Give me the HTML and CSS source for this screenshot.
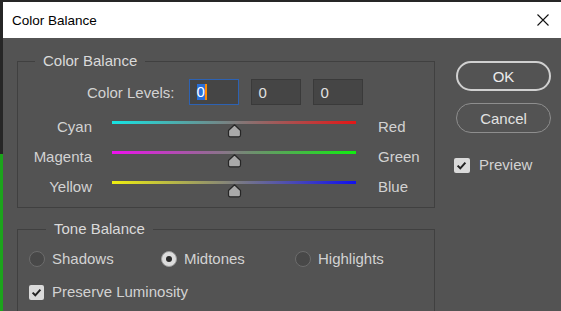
FILE: index.html
```html
<!DOCTYPE html>
<html lang="en">
<head>
    <meta charset="UTF-8">
    <meta name="viewport" content="width=device-width, initial-scale=1.0">
    <title>Color Balance</title>
    <link rel="stylesheet" href="styles.css">
</head>
<body>
    <div class="window">
        <div class="titlebar">
            <span class="title">Color Balance</span>
            <svg class="close" width="12" height="12" viewBox="0 0 12 12">
                <path d="M0.5 0.5 L11.5 11.5 M11.5 0.5 L0.5 11.5" stroke="#111" stroke-width="1.1" fill="none"/>
            </svg>
        </div>
        <div class="dialog">
            <div class="groups">
                <fieldset class="group balance">
                    <legend>Color Balance</legend>
                    <div class="levels">
                        <span class="levels-label">Color Levels:</span>
                        <div class="num focused"><span class="sel">0</span><span class="caret"></span></div>
                        <div class="num">0</div>
                        <div class="num">0</div>
                    </div>
                    <div class="slider-row">
                        <span class="from">Cyan</span>
                        <div class="track cyan-red">
                            <svg class="thumb" width="15" height="14" viewBox="0 0 15 14">
                                <path d="M7.5 0.8 L13.5 6.5 V11 Q13.5 12.8 11.7 12.8 H3.3 Q1.5 12.8 1.5 11 V6.5 Z" fill="#a9a9a9" stroke="#262626" stroke-width="1.2" stroke-linejoin="round"/>
                            </svg>
                        </div>
                        <span class="to">Red</span>
                    </div>
                    <div class="slider-row">
                        <span class="from">Magenta</span>
                        <div class="track magenta-green">
                            <svg class="thumb" width="15" height="14" viewBox="0 0 15 14">
                                <path d="M7.5 0.8 L13.5 6.5 V11 Q13.5 12.8 11.7 12.8 H3.3 Q1.5 12.8 1.5 11 V6.5 Z" fill="#a9a9a9" stroke="#262626" stroke-width="1.2" stroke-linejoin="round"/>
                            </svg>
                        </div>
                        <span class="to">Green</span>
                    </div>
                    <div class="slider-row">
                        <span class="from">Yellow</span>
                        <div class="track yellow-blue">
                            <svg class="thumb" width="15" height="14" viewBox="0 0 15 14">
                                <path d="M7.5 0.8 L13.5 6.5 V11 Q13.5 12.8 11.7 12.8 H3.3 Q1.5 12.8 1.5 11 V6.5 Z" fill="#a9a9a9" stroke="#262626" stroke-width="1.2" stroke-linejoin="round"/>
                            </svg>
                        </div>
                        <span class="to">Blue</span>
                    </div>
                </fieldset>
                <fieldset class="group tone">
                    <legend>Tone Balance</legend>
                    <div class="tones">
                        <label class="radio"><span class="dot"></span>Shadows</label>
                        <label class="radio"><span class="dot checked"></span>Midtones</label>
                        <label class="radio"><span class="dot"></span>Highlights</label>
                    </div>
                    <label class="check luminosity">
                        <span class="box"><svg width="15" height="15" viewBox="0 0 15 15"><path d="M3.6 7.6 L6.3 10.3 L11.4 4.6" stroke="#222" stroke-width="2" fill="none"/></svg></span>Preserve Luminosity
                    </label>
                </fieldset>
            </div>
            <div class="actions">
                <button class="btn default">OK</button>
                <button class="btn">Cancel</button>
                <label class="check preview">
                    <span class="box"><svg width="15" height="15" viewBox="0 0 15 15"><path d="M3.6 7.6 L6.3 10.3 L11.4 4.6" stroke="#222" stroke-width="2" fill="none"/></svg></span>Preview
                </label>
            </div>
        </div>
    </div>
</body>
</html>
```
FILE: styles.css
```css
body, html {
    margin: 0;
    padding: 0;
    width: 100%;
    height: 100%;
    overflow: hidden;
}
body {
    font-family: "Liberation Sans", Arial, sans-serif;
    font-size: 15px;
    color: #d2d2d2;
}
.window {
    height: 100%;
    box-sizing: border-box;
    padding: 2px 0 0 3px;
    display: flex;
    flex-direction: column;
    background: linear-gradient(to bottom, #262626 154px, #1ca41c 154px);
}
.titlebar {
    height: 36px;
    flex: none;
    background: #fff;
    display: flex;
    align-items: center;
    justify-content: space-between;
    padding: 0 12px 0 9px;
}
.title {
    color: #000;
    font-size: 13.5px;
}
.dialog {
    flex: 1;
    background: #535353;
    display: flex;
    align-items: flex-start;
    padding: 14px 0 0 14px;
    gap: 21px;
}
.groups {
    width: 418px;
    display: flex;
    flex-direction: column;
    gap: 12px;
}
.group {
    margin: 0;
    border: 1px solid #404040;
    min-width: 0;
}
.group legend {
    margin-left: 17px;
    padding: 0 8px;
    line-height: 18px;
    color: #dadada;
}
.balance {
    padding: 9px 0 11px 0;
}
.levels {
    display: flex;
    align-items: center;
    gap: 12px;
    margin-left: 69px;
}
.levels-label {
    margin-right: 2px;
}
.num {
    width: 50px;
    height: 26px;
    box-sizing: border-box;
    background: #454545;
    border: 1px solid #3a3a3a;
    color: #e0e0e0;
    padding-left: 7px;
    display: flex;
    align-items: center;
}
.num.focused {
    border-color: #2d62b3;
}
.sel {
    background: #2a6fd8;
    color: #fff;
    line-height: 16px;
}
.caret {
    width: 2px;
    height: 16px;
    background: #ff8a00;
}
.slider-row {
    display: grid;
    grid-template-columns: 74px 244px auto;
    column-gap: 20px;
    margin-top: 12px;
    line-height: 18px;
}
.levels + .slider-row {
    margin-top: 13px;
}
.from {
    text-align: right;
}
.to {
    margin-left: 2px;
}
.track {
    position: relative;
    height: 3px;
    margin-top: 3px;
}
.cyan-red {
    background: linear-gradient(to right, #16e4e4, #e41616);
}
.magenta-green {
    background: linear-gradient(to right, #ee10ee, #10ee10);
}
.yellow-blue {
    background: linear-gradient(to right, #eeee10, #1010ee);
}
.thumb {
    position: absolute;
    left: 115px;
    top: 3px;
}
.tone {
    padding: 12px 0 20px 11px;
}
.tones {
    display: grid;
    grid-template-columns: 132px 134px auto;
    line-height: 18px;
}
.radio, .check {
    display: flex;
    align-items: center;
    line-height: 18px;
}
.dot {
    width: 16px;
    height: 16px;
    box-sizing: border-box;
    border-radius: 50%;
    border: 1px solid #6c6c6c;
    background: #484848;
    margin-right: 7px;
    display: flex;
    align-items: center;
    justify-content: center;
}
.dot.checked {
    background: #dcdcdc;
    border-color: #9c9c9c;
}
.dot.checked::after {
    content: "";
    width: 6px;
    height: 6px;
    border-radius: 50%;
    background: #2a2a2a;
}
.box {
    width: 15px;
    height: 15px;
    border-radius: 2px;
    background: #dadada;
    margin-right: 8px;
    display: flex;
}
.luminosity {
    margin-top: 15px;
}
.actions {
    margin-top: 9px;
    display: flex;
    flex-direction: column;
    gap: 12px;
}
.btn {
    width: 95px;
    height: 30px;
    box-sizing: border-box;
    border-radius: 15px;
    background: #535353;
    border: 1px solid #8e8e8e;
    color: #e2e2e2;
    font-family: "Liberation Sans", Arial, sans-serif;
    font-size: 15px;
    padding: 0;
}
.btn.default {
    border: 2px solid #d0d0d0;
    color: #ececec;
}
.preview {
    margin: 11px 0 0 -2px;
}
.preview .box {
    width: 16px;
    margin-right: 9px;
}
```
